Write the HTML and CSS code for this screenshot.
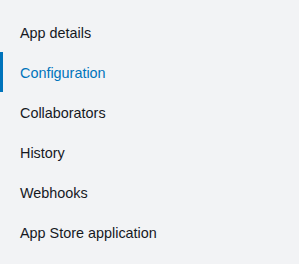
FILE: index.html
```html
<!DOCTYPE html>
<html lang="en">
<head>
    <meta charset="UTF-8">
    <meta name="viewport" content="width=device-width, initial-scale=1.0">
    <title>App settings</title>
    <link rel="stylesheet" href="styles.css">
</head>
<body>
    <nav class="side-nav">
        <a class="nav-item" href="#">App details</a>
        <a class="nav-item active" href="#">Configuration</a>
        <a class="nav-item" href="#">Collaborators</a>
        <a class="nav-item" href="#">History</a>
        <a class="nav-item" href="#">Webhooks</a>
        <a class="nav-item" href="#">App Store application</a>
    </nav>
</body>
</html>
```

FILE: styles.css
```css
body {
    font-family: Arial, "Liberation Sans", sans-serif;
    background-color: #f2f3f5;
    margin: 0;
    padding: 12px 0 0 0;
}
.side-nav {
    display: flex;
    flex-direction: column;
}
.nav-item {
    display: block;
    height: 40px;
    line-height: 37px;
    padding: 3px 0 0 17px;
    box-sizing: border-box;
    font-size: 14.4px;
    color: #16191f;
    text-decoration: none;
    border-left: 3px solid transparent;
}
.nav-item.active {
    color: #0073bb;
    border-left-color: #0073bb;
}
```
